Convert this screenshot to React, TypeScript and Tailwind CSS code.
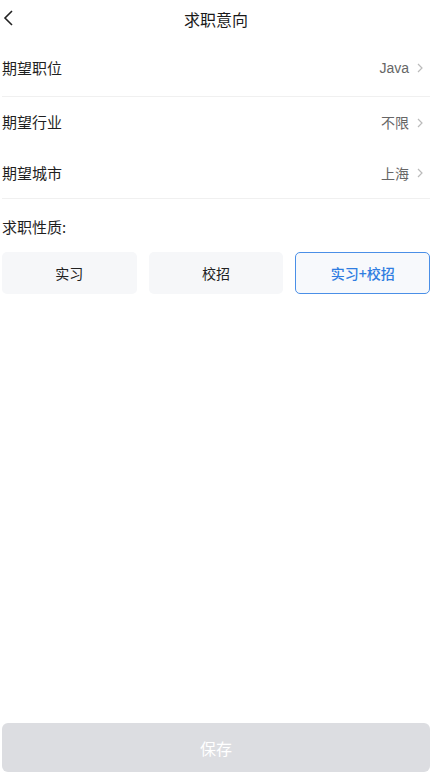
import React from 'react';

const rows = [
  { label: '期望职位', value: 'Java', divider: true },
  { label: '期望行业', value: '不限', divider: false },
  { label: '期望城市', value: '上海', divider: true },
];

const types = ['实习', '校招', '实习+校招'];

export default function App() {
  const selected = 2;
  return (
    <div
      className="w-[442px] h-[781px] bg-white flex flex-col pl-[2px] pr-[12px] text-[#333]"
      style={{ fontFamily: '"Noto Sans CJK SC", "Noto Sans", sans-serif' }}
    >
      <div className="relative h-[37px] flex items-center justify-center">
        <svg className="absolute left-[1px] top-[10px] w-[10px] h-[16px]" viewBox="0 0 10 16" fill="none" stroke="#222" strokeWidth={1.6}>
          <path d="M9 1L2 8l7 7" />
        </svg>
        <span className="text-[16px] text-[#1a1a1a]">求职意向</span>
      </div>

      <div className="flex flex-col pt-[3px]">
        {rows.map((r, i) => (
          <div
            key={r.label}
            className={`flex items-center justify-between ${i === 0 ? 'h-[57px]' : 'h-[51px]'} ${r.divider ? 'border-b border-[#f0f0f0]' : ''}`}
          >
            <span className="text-[15px] text-[#1f1f1f]">{r.label}</span>
            <div className="flex items-center gap-[8px] pr-[7px]">
              <span className="text-[14px] text-[#666]" style={{ fontFamily: r.value === 'Java' ? '"Liberation Sans", sans-serif' : undefined }}>{r.value}</span>
              <svg className="w-[6px] h-[10px]" viewBox="0 0 6 10" fill="none" stroke="#bbb" strokeWidth={1.2}>
                <path d="M1 1l4 4-4 4" />
              </svg>
            </div>
          </div>
        ))}
      </div>

      <div className="pt-[17px] text-[15px] text-[#1f1f1f] leading-[22px]">求职性质:</div>

      <div className="grid grid-cols-3 gap-[12px] mt-[14px]">
        {types.map((t, i) => (
          <div
            key={t}
            className={`h-[42px] rounded-[5px] flex items-center justify-center text-[14px] ${
              i === selected
                ? 'border border-[#4a8fe7] bg-[#f7f9fc] text-[#2f7de1] font-medium'
                : 'bg-[#f6f7f9] text-[#222]'
            }`}
          >
            {t}
          </div>
        ))}
      </div>

      <div className="flex-1" />

      <div className="mb-[9px] h-[49px] rounded-[6px] bg-[#dcdde1] flex items-center justify-center text-[16px] text-white">
        保存
      </div>
    </div>
  );
}
